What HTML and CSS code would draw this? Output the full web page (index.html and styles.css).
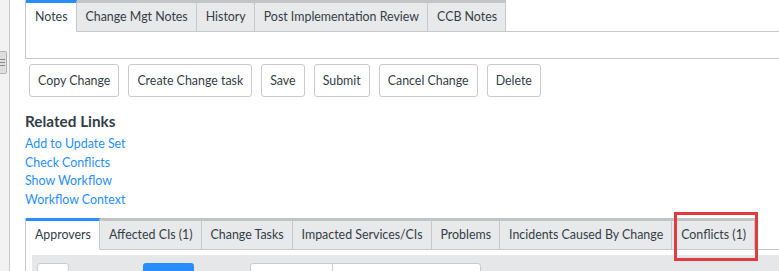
FILE: index.html
```html
<!DOCTYPE html>
<html lang="en">
<head>
    <meta charset="UTF-8">
    <title>Change Request</title>
    <link rel="stylesheet" href="styles.css">
</head>
<body>
    <div class="sidebar">
        <div class="handle">
            <span></span><span></span><span></span>
        </div>
    </div>
    <div class="main">
        <div class="form-tabs">
            <div class="tab-strip">
                <div class="tab active">Notes</div>
                <div class="tab">Change Mgt Notes</div>
                <div class="tab">History</div>
                <div class="tab">Post Implementation Review</div>
                <div class="tab">CCB Notes</div>
                <div class="tab-fill"></div>
            </div>
        </div>

        <div class="actions">
            <button>Copy Change</button>
            <button>Create Change task</button>
            <button>Save</button>
            <button>Submit</button>
            <button>Cancel Change</button>
            <button>Delete</button>
        </div>

        <div class="related-links">
            <h3>Related Links</h3>
            <a href="#">Add to Update Set</a>
            <a href="#">Check Conflicts</a>
            <a href="#">Show Workflow</a>
            <a href="#">Workflow Context</a>
        </div>

        <div class="related-lists">
            <div class="tab-strip">
                <div class="tab active">Approvers</div>
                <div class="tab">Affected CIs (1)</div>
                <div class="tab">Change Tasks</div>
                <div class="tab">Impacted Services/CIs</div>
                <div class="tab">Problems</div>
                <div class="tab">Incidents Caused By Change</div>
                <div class="tab">Conflicts (1)</div>
                <div class="tab-fill"></div>
            </div>
            <div class="list-panel">
                <div class="list-toggle"></div>
                <div class="list-new"></div>
                <div class="list-search">
                    <div class="search-field"></div>
                    <div class="search-input"></div>
                </div>
            </div>
        </div>
    </div>

    <!-- annotation box around the Conflicts tab -->
    <div class="highlight"></div>
</body>
</html>
```

FILE: styles.css
```css
html {
    overflow: hidden;
}

body {
    margin: 0;
    height: 271px;
    overflow: hidden;
    display: flex;
    font-family: "Lato", "Open Sans", sans-serif;
    font-size: 12.4px;
    color: #343d47;
    background-color: white;
}

.sidebar {
    width: 9px;
    flex-shrink: 0;
    background-color: #f2f2f2;
    border-right: 1px solid #c9c9c9;
}

.handle {
    margin-top: 51px;
    width: 7px;
    height: 23px;
    background-color: #dedede;
    border: 1px solid #b4b4b4;
    border-left: none;
    border-radius: 0 2px 2px 0;
    box-sizing: border-box;
    display: flex;
    flex-direction: column;
    justify-content: center;
    gap: 2px;
}

.handle span {
    display: block;
    height: 1px;
    margin-right: 1px;
    background-color: #8a8a8a;
}

.main {
    flex: 1;
    padding-left: 15px;
    min-width: 0;
}

/* tabs */
.tab-strip {
    display: flex;
    height: 32px;
}

.tab {
    box-sizing: border-box;
    height: 32px;
    line-height: 28px;
    padding: 0 8px 0 9px;
    white-space: nowrap;
    background-color: #e8e9ea;
    border-top: 3px solid #c1c3c5;
    border-right: 1px solid #c7c8ca;
    border-bottom: 1px solid #c7c8ca;
}

.tab.active {
    background-color: white;
    border-top-color: #278efc;
    border-bottom-color: white;
}

.tab-fill {
    flex: 1;
    border-bottom: 1px solid #c7c8ca;
}

.form-tabs {
    height: 59px;
    box-sizing: border-box;
    border-left: 1px solid #c7c8ca;
    border-bottom: 1px solid #c7c8ca;
}

/* buttons */
.actions {
    display: flex;
    gap: 9px;
    padding: 5px 0 0 4px;
}

.actions button {
    height: 33px;
    padding: 0 8px;
    font-family: inherit;
    font-size: 12.4px;
    color: #343d47;
    background-color: white;
    border: 1px solid #c9cacc;
    border-radius: 3px;
}

/* related links */
.related-links {
    margin-top: 14px;
}

.related-links h3 {
    margin: 0 0 3px;
    font-size: 15.3px;
    line-height: 21px;
    color: #343d47;
}

.related-links a {
    display: block;
    font-size: 12.4px;
    line-height: 18.7px;
    color: #278efc;
    text-decoration: none;
}

/* related lists */
.related-lists {
    margin-top: 8px;
    border-left: 1px solid #c7c8ca;
}

.list-panel {
    margin: 5px 0 0 6px;
    height: 40px;
    padding: 8px 0 0 5px;
    background-color: #e6e7e9;
    display: flex;
    align-items: flex-start;
}

.list-toggle {
    width: 30px;
    height: 30px;
    background-color: white;
    border: 1px solid #c9cacc;
    border-radius: 3px;
}

.list-new {
    margin-left: 74px;
    width: 51px;
    height: 30px;
    background-color: #278efc;
    border-radius: 3px;
}

.list-search {
    margin-left: 56px;
    width: 229px;
    height: 30px;
    display: flex;
    background-color: white;
    border: 1px solid #c9cacc;
    border-radius: 3px;
}

.search-field {
    width: 81px;
    border-right: 1px solid #c9cacc;
}

.highlight {
    position: absolute;
    left: 674px;
    top: 212px;
    width: 78px;
    height: 43px;
    border: 3px solid #e03c3f;
}
```
